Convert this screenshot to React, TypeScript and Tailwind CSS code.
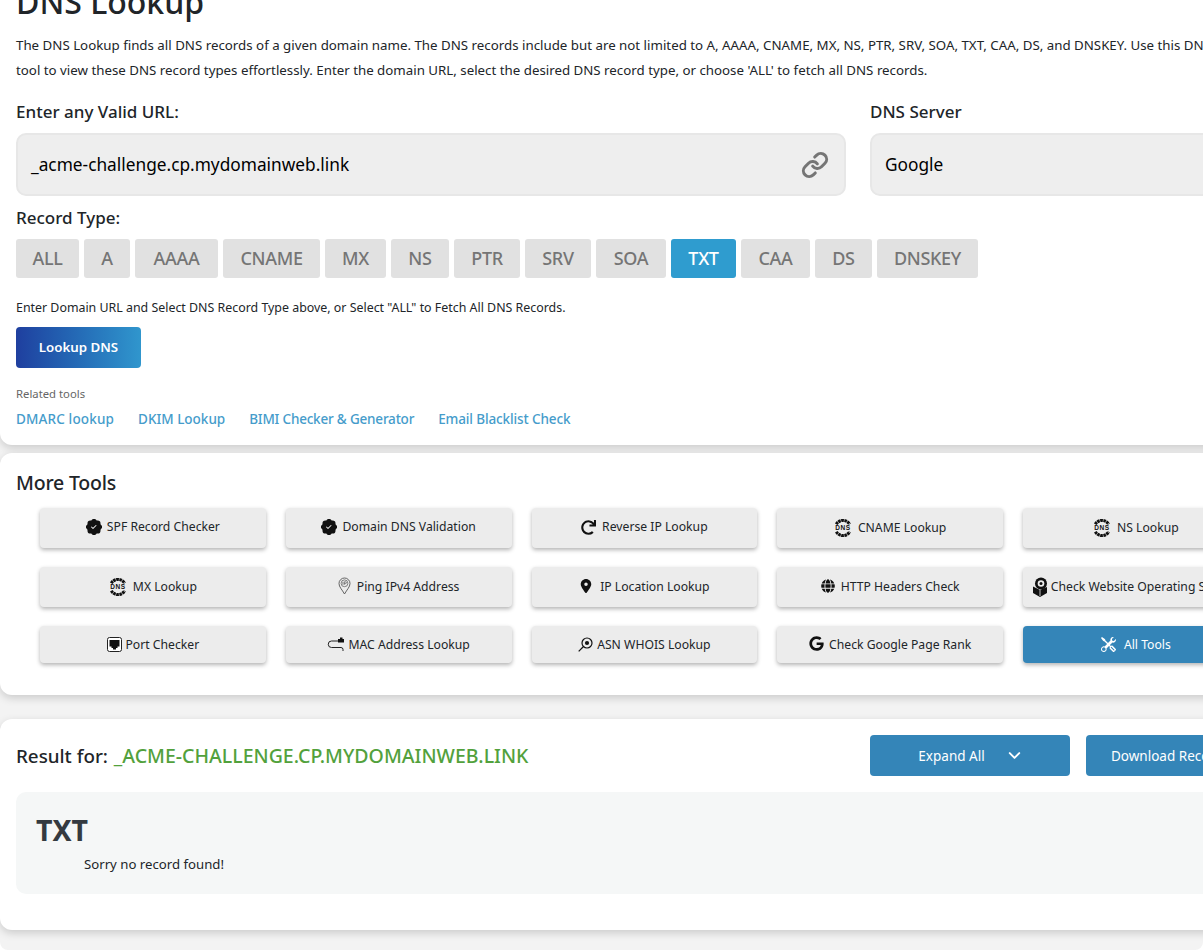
import React from "react";
import { FaLocationDot, FaGoogle } from "react-icons/fa6";
import { FaRedo, FaGlobe } from "react-icons/fa";
import { BsPatchCheckFill, BsTools } from "react-icons/bs";
import { LuLink, LuChevronDown } from "react-icons/lu";

const F = "font-['Noto_Sans',sans-serif]";

function Dns() {
  return (
    <svg width="18" height="18" viewBox="0 0 18 18" className="shrink-0">
      <path d="M2.300 5.200 A7.800 7.800 0 0 1 15.700 5.200" fill="none" stroke="#111" strokeWidth="3" strokeDasharray="2.600 .5" />
      <path d="M2.300 12.800 A7.800 7.800 0 0 0 15.700 12.800" fill="none" stroke="#111" strokeWidth="3" strokeDasharray="2.600 .5" />
      <text x="9" y="11.300" textAnchor="middle" fontSize="6.500" fontWeight="700" letterSpacing=".6" fill="#111" fontFamily="'Liberation Sans',sans-serif">DNS</text>
    </svg>
  );
}
function PinIP() {
  return (
    <svg width="13" height="18" viewBox="0 0 13 18" className="shrink-0 -translate-y-px">
      <path d="M6.500 17 C4 12.500 1 10 1 6.500 A5.500 5.500 0 0 1 12 6.500 C12 10 9 12.500 6.500 17Z" fill="none" stroke="#555" strokeWidth=".9" />
      <circle cx="6.500" cy="6.300" r="3.400" fill="none" stroke="#555" strokeWidth=".7" />
      <path d="M4.900 4.800v3M6.300 7.800v-3h1.200a.9.9 0 0 1 0 1.800H6.300" fill="none" stroke="#555" strokeWidth=".7" />
    </svg>
  );
}
function Port() {
  return (
    <svg width="15" height="15" viewBox="0 0 15 15" className="shrink-0">
      <rect x=".5" y=".5" width="14" height="14" rx="2" fill="#fff" stroke="#222" />
      <path d="M2.500 3h10v6.500h-2v1.600h-1.500v1.400h-3v-1.400H4.500v-1.600h-2z" fill="#111" />
    </svg>
  );
}
function Cable() {
  return (
    <svg width="17" height="15" viewBox="0 0 17 15" className="shrink-0">
      <path d="M11 4H4.500a3 3 0 0 0 0 6.500h9.500a2 2 0 0 1 2 2v1.500" fill="none" stroke="#222" strokeWidth="1" />
      <rect x="11" y="2" width="6" height="3.500" fill="#111" />
      <rect x="13" y="0.500" width="2.500" height="2" fill="#111" />
    </svg>
  );
}
function Asn() {
  return (
    <svg width="15" height="15" viewBox="0 0 15 15" className="shrink-0">
      <circle cx="9" cy="6" r="5" fill="none" stroke="#111" strokeWidth="1.200" />
      <circle cx="9" cy="6" r="2.100" fill="#111" />
      <path d="M5.500 9.500L.7 14.300" stroke="#111" strokeWidth="1.200" />
    </svg>
  );
}
function Os() {
  return (
    <svg width="16" height="20" viewBox="0 0 16 20" className="shrink-0">
      <circle cx="9" cy="6.500" r="6" fill="#111" />
      <circle cx="9" cy="6.500" r="3.300" fill="#eee" />
      <circle cx="9" cy="6.500" r="1.500" fill="#111" />
      <path d="M1 9.500l7 3.500 7-3v6l-7 4-7-4z" fill="#111" />
      <path d="M8 13v6" stroke="#eee" strokeWidth=".8" />
    </svg>
  );
}

type Tool = { label: string; icon: React.ReactNode; gap: string; dark?: boolean; textShift?: string };
const check = <BsPatchCheckFill className="text-[16px] text-[#111] -translate-y-px shrink-0" />;
const tools: Tool[][] = [
  [
    { label: "SPF Record Checker", icon: check, gap: "gap-[5px]", textShift: "-translate-y-px" },
    { label: "Domain DNS Validation", icon: check, gap: "gap-[5px]", textShift: "-translate-y-px" },
    { label: "Reverse IP Lookup", icon: <FaRedo className="text-[15px] text-[#111] -translate-y-px shrink-0" />, gap: "gap-[6px]", textShift: "-translate-y-px" },
    { label: "CNAME Lookup", icon: <Dns />, gap: "gap-[6px]" },
    { label: "NS Lookup", icon: <Dns />, gap: "gap-[6px]" },
  ],
  [
    { label: "MX Lookup", icon: <Dns />, gap: "gap-[6px]" },
    { label: "Ping IPv4 Address", icon: <PinIP />, gap: "gap-[6px]" },
    { label: "IP Location Lookup", icon: <FaLocationDot className="text-[14px] text-[#111] -translate-y-px shrink-0" />, gap: "gap-[7px]" },
    { label: "HTTP Headers Check", icon: <FaGlobe className="text-[14px] text-[#111] -translate-y-px shrink-0" />, gap: "gap-[6px]" },
    { label: "Check Website Operating System", icon: <Os />, gap: "gap-[3px]" },
  ],
  [
    { label: "Port Checker", icon: <Port />, gap: "gap-[4px]", textShift: "translate-y-px" },
    { label: "MAC Address Lookup", icon: <Cable />, gap: "gap-[4px]", textShift: "translate-y-px" },
    { label: "ASN WHOIS Lookup", icon: <Asn />, gap: "gap-[4px]", textShift: "translate-y-px" },
    { label: "Check Google Page Rank", icon: <FaGoogle className="text-[15px] text-[#111] -translate-y-px shrink-0" />, gap: "gap-[5px]", textShift: "translate-y-px" },
    { label: "All Tools", icon: <BsTools className="text-[15px] text-white shrink-0" />, gap: "gap-[8px]", dark: true, textShift: "translate-y-px" },
  ],
];

const types = ["ALL", "A", "AAAA", "CNAME", "MX", "NS", "PTR", "SRV", "SOA", "TXT", "CAA", "DS", "DNSKEY"];
const typeW = ["w-[63px]", "w-[46px]", "w-[83px]", "w-[97px]", "w-[61px]", "w-[58px]", "w-[66px]", "w-[66px]", "w-[70px]", "w-[65px]", "w-[69px]", "w-[57px]", "w-[101px]"];

export default function App() {
  return (
    <div className="w-[1203px] h-[950px] overflow-hidden bg-white">
      <div className={`${F} w-[1203px] h-[950px] overflow-hidden bg-[#f3f3f3] rounded-b-lg text-[#212529]`}>
        <div className="w-[1300px] -mt-[18px]">
          <section className="bg-white rounded-bl-xl shadow-[0_3px_8px_rgba(0,0,0,0.17)] pl-4 h-[463px]">
            <h1 className="text-[32px] leading-[40px] font-medium text-[#212529]">DNS Lookup</h1>
            <p className="mt-[11px] text-[13.3px] leading-[25px] w-[1260px] whitespace-nowrap text-[#212529]">
              The DNS Lookup finds all DNS records of a given domain name. The DNS records include but are not limited to A, AAAA, CNAME, MX, NS, PTR, SRV, SOA, TXT, CAA, DS, and DNSKEY. Use this DNS lookup<br />
              tool to view these DNS record types effortlessly. Enter the domain URL, select the desired DNS record type, or choose 'ALL' to fetch all DNS records.
            </p>
            <div className="flex gap-[24px] mt-[17px]">
              <div className="w-[830px]">
                <div className="text-[17px] leading-[24px] font-medium">Enter any Valid URL:</div>
                <div className="mt-[9px] h-[63px] bg-[#eeeeee] border-2 border-[#e7e7e7] rounded-[10px] flex items-center justify-between pl-[13px] pr-[15px]">
                  <span className="text-[17.3px] text-black">_acme-challenge.cp.mydomainweb.link</span>
                  <LuLink className="text-[28px] text-[#757575]" strokeWidth={2.6} />
                </div>
              </div>
              <div className="w-[400px]">
                <div className="text-[17px] leading-[24px] font-medium">DNS Server</div>
                <div className="mt-[9px] h-[63px] bg-[#eeeeee] border-2 border-[#e7e7e7] rounded-[10px] flex items-center pl-[13px]">
                  <span className="text-[17.3px] text-black">Google</span>
                </div>
              </div>
            </div>
            <div className="mt-[10px] text-[17px] leading-[24px] font-medium">Record Type:</div>
            <div className="flex gap-[5px] mt-[9px]">
              {types.map((t, i) => (
                <div
                  key={t}
                  className={`${typeW[i]} h-[39px] rounded-[3px] flex items-center justify-center text-[18px] font-medium tracking-[-0.3px] ${t === "TXT" ? "bg-[#2f9ccf] text-white" : "bg-[#e1e1e1] text-[#757575]"}`}
                >
                  {t}
                </div>
              ))}
            </div>
            <p className="mt-[21px] text-[12.4px] leading-[18px] text-[#212529]">Enter Domain URL and Select DNS Record Type above, or Select "ALL" to Fetch All DNS Records.</p>
            <div className="mt-[10px] w-[125px] h-[41px] rounded-[4px] bg-gradient-to-r from-[#1f3f9f] to-[#3096cd] flex items-center justify-center text-white text-[13.3px] font-semibold">Lookup DNS</div>
            <div className="mt-[18px] text-[11.3px] leading-[16px] text-[#666]">Related tools</div>
            <div className="mt-[8px] flex gap-[24px] text-[13.5px] leading-[18px] font-medium text-[#459ccb]">
              <span className="tracking-[0.15px]">DMARC lookup</span>
              <span>DKIM Lookup</span>
              <span className="tracking-[-0.2px]">BIMI Checker &amp; Generator</span>
              <span className="tracking-[-0.12px]">Email Blacklist Check</span>
            </div>
          </section>

          <section className="mt-[8px] bg-white rounded-l-xl shadow-[0_3px_8px_rgba(0,0,0,0.17)] h-[242px] pl-4 pt-[17px]">
            <h2 className="text-[19.5px] leading-[26px] font-medium tracking-[-0.2px]">More Tools</h2>
            <div className="mt-[12px] ml-[24px] flex flex-col gap-[19px]">
              {tools.map((row, r) => (
                <div key={r} className={`flex gap-[20px] ${r === 2 ? "h-[37px]" : "h-[40px]"}`}>
                  {row.map((t) => (
                    <div
                      key={t.label}
                      className={`w-[225.75px] h-full shrink-0 rounded-[4px] flex items-center justify-center whitespace-nowrap overflow-hidden text-[12.2px] shadow-[0_2px_4px_rgba(0,0,0,0.3)] ${t.gap} ${t.dark ? "bg-[#3485b8] text-white" : "bg-[#ececec] text-[#212529]"}`}
                    >
                      {t.icon}
                      <span className={t.textShift}>{t.label}</span>
                    </div>
                  ))}
                </div>
              ))}
            </div>
          </section>

          <section className="mt-[24px] bg-white rounded-l-xl shadow-[0_3px_8px_rgba(0,0,0,0.17)] h-[211px] px-4 pt-[16px]">
            <div className="flex items-center h-[41px]">
              <div className="w-[854px] shrink-0 text-[18.8px] font-medium whitespace-nowrap">
                Result for: <span className="text-[#52a13c] text-[19.5px] ml-[1px]">_ACME-CHALLENGE.CP.MYDOMAINWEB.LINK</span>
              </div>
              <div className="w-[200px] shrink-0 h-[41px] rounded-[4px] bg-[#3485b8] text-white text-[13.5px] flex items-center justify-center gap-[20px] pl-[2px]">
                <span className="translate-y-px">Expand All</span>
                <LuChevronDown className="text-[19px]" strokeWidth={2.4} />
              </div>
              <div className="ml-[16px] w-[200px] shrink-0 h-[41px] rounded-[4px] bg-[#3485b8] text-white text-[13.5px] flex items-center pl-[25px] whitespace-nowrap">
                <span className="translate-y-px">Download Records</span>
              </div>
            </div>
            <div className="mt-[16px] w-[1268px] h-[102px] rounded-[10px] bg-[#f5f7f7] pl-[20px] pt-[20px]">
              <div className="text-[28.5px] leading-[36px] font-bold text-[#343a40]">TXT</div>
              <div className="mt-[7px] ml-[48px] text-[13.2px] leading-[18px] text-[#212529]">Sorry no record found!</div>
            </div>
          </section>
        </div>
      </div>
    </div>
  );
}
